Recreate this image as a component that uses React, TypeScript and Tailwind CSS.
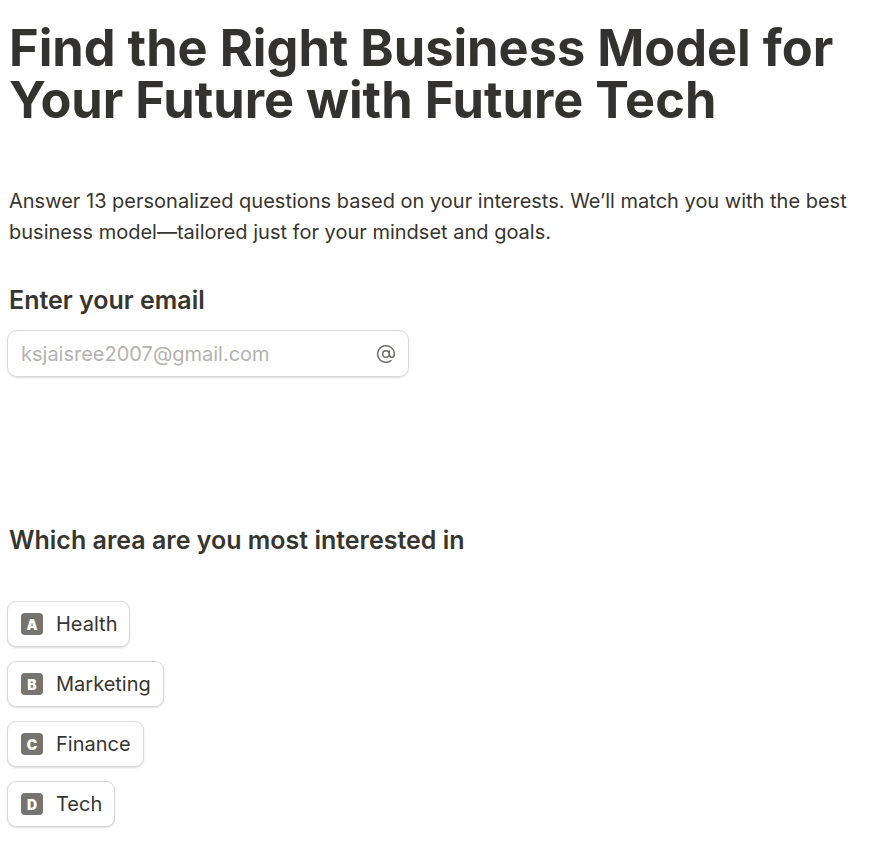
import { AtSign } from 'lucide-react';

const options = [
  { key: 'A', label: 'Health' },
  { key: 'B', label: 'Marketing' },
  { key: 'C', label: 'Finance' },
  { key: 'D', label: 'Tech' },
];

export default function App() {
  return (
    <div className="min-h-screen bg-white text-[#37352f] font-['Inter',sans-serif] px-[9px] pt-[22px]">
      <h1 className="text-[50.5px] leading-[52px] font-bold text-[#33322e]">
        Find the Right Business Model for Your Future with Future Tech
      </h1>

      <p className="mt-[60px] text-[20px] leading-[31px]">
        Answer 13 personalized questions based on your interests. We’ll match you with the best business model—tailored
        just for your mindset and goals.
      </p>

      <h2 className="mt-[36px] text-[25px] leading-[32px] font-semibold">Enter your email</h2>

      <div className="mt-[14px] -ml-[2px] w-[402px] h-[47px] flex items-center justify-between rounded-[10px] border border-[#d9d9d8] shadow-[0_1px_2px_rgba(0,0,0,0.14)] pl-[13px] pr-[12px]">
        <input
          type="email"
          placeholder="ksjaisree2007@gmail.com"
          className="flex-1 min-w-0 bg-transparent text-[20px] outline-none placeholder-[#b4b3b0]"
        />
        <AtSign size={20} strokeWidth={1.8} className="text-[#6f6e6a]" />
      </div>

      <h2 className="mt-[147px] text-[25px] leading-[32px] font-semibold">Which area are you most interested in</h2>

      <div className="mt-[45px] flex flex-col items-start gap-[14px]">
        {options.map((o) => (
          <button
            key={o.key}
            className="-ml-[2px] h-[46px] flex items-center gap-[13px] pl-[13px] pr-[12px] rounded-[9px] border border-[#d9d9d8] shadow-[0_1px_2px_rgba(0,0,0,0.14)] bg-white text-[20px]"
          >
            <span className="w-[22px] h-[22px] rounded-[4px] bg-[#77746f] text-white text-[14px] font-black flex items-center justify-center">
              {o.key}
            </span>
            {o.label}
          </button>
        ))}
      </div>
    </div>
  );
}
